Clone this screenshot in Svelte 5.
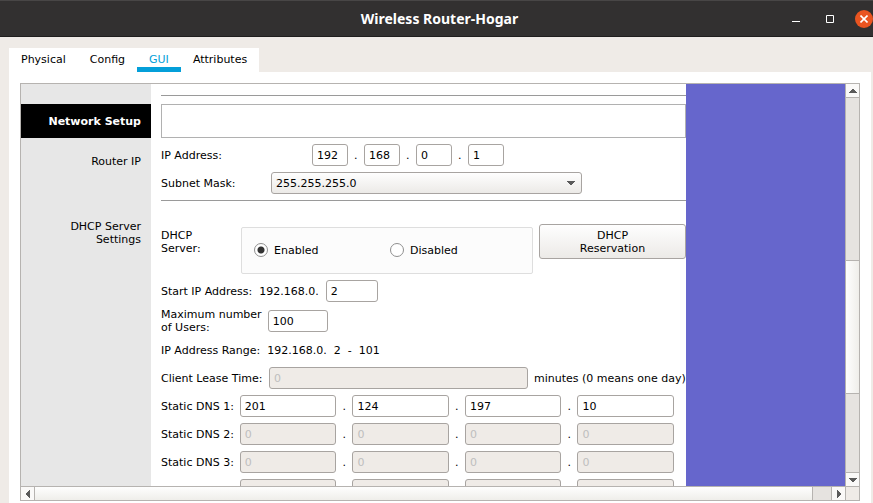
<script>
  const tabs = ['Physical', 'Config', 'GUI', 'Attributes'];
  let active = $state('GUI');
  let dhcp = $state('enabled');
  const routerIp = ['192', '168', '0', '1'];
  const servers = [
    { label: 'Static DNS 1:', parts: ['201', '124', '197', '10'], off: false },
    { label: 'Static DNS 2:', parts: ['0', '0', '0', '0'], off: true },
    { label: 'Static DNS 3:', parts: ['0', '0', '0', '0'], off: true },
    { label: 'Static DNS 4:', parts: ['0', '0', '0', '0'], off: true }
  ];
</script>

{#snippet arrowDown()}
  <svg width="8" height="4" viewBox="0 0 8 4"><path d="M0 0h8v1H7v1H6v1H5v1H3V3H2V2H1V1H0z" fill="#5a5a5a" /></svg>
{/snippet}

<div class="window">
  <header>
    <h1>Wireless Router-Hogar</h1>
    <div class="controls">
      <button aria-label="Minimize"><svg width="8" height="10" viewBox="0 0 8 10"><path d="M0 7.5h8" stroke="#fff" /></svg></button>
      <button aria-label="Maximize"><svg width="8" height="8" viewBox="0 0 8 8"><path d="M.5 .5h7v7h-7z" fill="none" stroke="#fff" /></svg></button>
      <button class="close" aria-label="Close"><svg width="8" height="8" viewBox="0 0 8 8"><path d="M.5 .5l7 7M7.5 .5l-7 7" stroke="#fff" stroke-width="1.6" /></svg></button>
    </div>
  </header>

  <nav>
    {#each tabs as tab}
      <button class="tab" class:active={tab === active} onclick={() => (active = tab)}>{tab}</button>
    {/each}
  </nav>

  <main>
    <div class="frame">
      <div class="view">
        <aside>
          <h2>Network Setup</h2>
          <p class="router">Router IP</p>
          <p class="settings">DHCP Server Settings</p>
        </aside>

        <form>
          <hr />
          <div class="blank"></div>
          <div class="row">
            <label class="ip-label" for="ip0">IP Address:</label>
            {#each routerIp as part, i}
              {#if i}<span class="dot">.</span>{/if}
              <input class="octet" id="ip{i}" aria-label={i ? `IP Address part ${i + 1}` : null} value={part} />
            {/each}
          </div>
          <div class="row">
            <label class="mask-label" for="mask">Subnet Mask:</label>
            <div class="picker">
              <select id="mask"><option>255.255.255.0</option></select>
              {@render arrowDown()}
            </div>
          </div>
          <hr />

          <div class="dhcp">
            <span class="dhcp-label" id="dhcp">DHCP Server:</span>
            <div class="choice" role="radiogroup" aria-labelledby="dhcp">
              <label><input type="radio" name="dhcp" value="enabled" bind:group={dhcp} />Enabled</label>
              <label><input type="radio" name="dhcp" value="disabled" bind:group={dhcp} />Disabled</label>
            </div>
            <button type="button" class="reserve">DHCP<br />Reservation</button>
          </div>

          <div class="row wide">
            <label for="start">Start IP Address:</label>
            <span>192.168.0.</span>
            <input class="start" id="start" value="2" />
          </div>
          <div class="row">
            <label for="users">Maximum number<br />of Users:</label>
            <input id="users" value="100" />
          </div>
          <div class="row wide range">
            <span>IP Address Range:</span>
            <span>192.168.0.</span>
            <span>2</span>
            <span>-</span>
            <span>101</span>
          </div>
          <div class="row">
            <label class="lease-label" for="lease">Client Lease Time:</label>
            <input class="lease" id="lease" value="0" disabled />
            <span>minutes (0 means one day)</span>
          </div>
          {#each servers as server, s}
            <div class="row dns">
              <label for="dns{s}0">{server.label}</label>
              {#each server.parts as part, i}
                {#if i}<span class="dot">.</span>{/if}
                <input id="dns{s}{i}" aria-label={i ? `${server.label} part ${i + 1}` : null} value={part} disabled={server.off} />
              {/each}
            </div>
          {/each}
        </form>
        <div class="backdrop"></div>
      </div>

      <div class="vbar">
        <button aria-label="Scroll up"><svg width="8" height="4" viewBox="0 0 8 4"><path d="M3 0h2v1h1v1h1v1h1v1H0V3h1V2h1V1h1z" fill="#5a5a5a" /></svg></button>
        <div class="before"></div>
        <div class="thumb"></div>
        <div class="after"></div>
        <button aria-label="Scroll down">{@render arrowDown()}</button>
      </div>

      <div class="hbar">
        <button aria-label="Scroll left"><svg width="4" height="8" viewBox="0 0 4 8"><path d="M4 0v8H3V7H2V6H1V5H0V3h1V2h1V1h1V0z" fill="#5a5a5a" /></svg></button>
        <div class="thumb"></div>
        <div class="after"></div>
        <button aria-label="Scroll right"><svg width="4" height="8" viewBox="0 0 4 8"><path d="M0 0h1v1h1v1h1v1h1v2H3v1H2v1H1v1H0z" fill="#5a5a5a" /></svg></button>
      </div>
      <div class="corner"></div>
    </div>
  </main>
</div>

<style>
  :global(body) { margin: 0; }
  * { box-sizing: border-box; }
  .window {
    display: flex;
    flex-direction: column;
    height: 100vh;
    overflow: hidden;
    background: #efebe7;
    color: #000;
    font: 11px/13px "DejaVu Sans", sans-serif;
  }
  button, input, select { font: inherit; color: inherit; margin: 0; }
  button { padding: 0; border: 0; background: none; }
  svg { display: block; }

  header {
    position: relative;
    display: flex;
    align-items: center;
    justify-content: center;
    flex: none;
    height: 37px;
    background: #323030;
    border-top: 1px solid #484646;
    border-bottom: 1px solid #1f1e1e;
    color: #fff;
  }
  h1 { margin: 0; padding-left: 6px; font: bold 14px/18px "Noto Sans", sans-serif; }
  .controls { position: absolute; right: 0; top: 0; height: 35px; display: flex; align-items: center; gap: 16px; }
  .controls button { display: grid; place-items: center; width: 18px; height: 18px; }
  .controls .close { background: #e95420; border-radius: 50%; }

  nav { display: flex; align-self: flex-start; flex: none; margin: 11px 0 0 9px; background: #fff; }
  .tab {
    height: 24px;
    padding: 0 12px;
    line-height: 24px;
  }
  .tab.active { color: #049fd9; box-shadow: inset 0 -5px #049fd9; }

  main { flex: 1; min-height: 0; display: flex; margin: 0 2px 0 9px; padding: 11px 11px 2px; background: #fff; }
  .frame {
    flex: 1;
    min-width: 0;
    display: grid;
    grid-template: minmax(0, 1fr) 14px / minmax(0, 1fr) 14px;
    border: 1px solid #b6b3b0;
  }
  .view { display: flex; overflow: hidden; }

  aside { flex: none; width: 130px; padding-top: 20px; background: #e7e7e7; text-align: right; }
  h2 { margin: 0; padding: 1px 10px 0 0; background: #000; color: #fff; font-size: 11px; line-height: 33px; }
  aside p { margin: 0; padding: 0 10px 0 40px; }
  .router { margin-top: 17px; }
  .settings { margin-top: 52px; }

  form { flex: none; width: 535px; display: flex; flex-direction: column; gap: 6px; padding: 11px 0 0 10px; background: #fff; }
  hr { width: 100%; height: 1px; margin: 0; border: 0; flex: none; background: #9a9a9a; }
  .blank { flex: none; height: 34px; margin-top: 2px; border: 1px solid #b1b1b1; }
  .row { display: flex; flex: none; align-items: center; gap: 6px; min-height: 22px; white-space: nowrap; }
  .wide { gap: 7px; }
  .dot { width: 4px; }
  input:not([type="radio"]), select {
    width: 60px;
    height: 22px;
    padding: 0 4px;
    border: 1px solid #a8a4a1;
    border-radius: 3px;
    background: #fff;
  }
  input:not([type="radio"]):disabled { background: #efebe7; color: #bebebe; }
  .row .octet { width: 36px; }
  .ip-label { width: 145px; }
  .mask-label { width: 104px; }
  .lease-label { width: 102px; }
  .picker { position: relative; width: 311px; }
  .picker select { display: block; width: 100%; appearance: none; background: linear-gradient(#fefefe, #eceae7); }
  .picker :global(svg) { position: absolute; right: 7px; top: 9px; pointer-events: none; }

  .dhcp { display: flex; flex: none; gap: 6px; align-items: flex-start; padding-top: 17px; }
  .dhcp-label { width: 74px; padding: 5px 20px 0 0; }
  .choice {
    width: 292px;
    height: 47px;
    margin-top: 3px;
    padding: 0 0 1px 12px;
    display: flex;
    align-items: center;
    border: 1px solid #dedede;
    border-radius: 2px;
    background: #fcfcfc;
  }
  .choice label { display: flex; align-items: center; gap: 6px; width: 136px; }
  input[type="radio"] {
    appearance: none;
    width: 14px;
    height: 14px;
    border: 1px solid #8f8f8f;
    border-radius: 50%;
    background: #fff;
  }
  input[type="radio"]:checked { background: radial-gradient(circle, #333 0 3px, #fff 4px); }
  .reserve {
    flex: 1;
    height: 35px;
    border: 1px solid #a8a4a1;
    border-radius: 3px;
    background: linear-gradient(#fefefe, #eceae7);
  }
  .row .start { width: 52px; }
  .range { min-height: 21px; }
  .row .lease { width: 259px; }
  .dns { padding-right: 12px; }
  .dns input:not([type="radio"]) { flex: 1; min-width: 0; }
  .backdrop { flex: 1; background: #6666cc; }

  .vbar, .hbar { display: flex; background: #e6e3e0; }
  .vbar { flex-direction: column; border-left: 1px solid #b6b3b0; }
  .hbar { border-top: 1px solid #b6b3b0; }
  .vbar button, .hbar button { flex: none; display: grid; place-items: center; width: 13px; height: 13px; background: #faf9f8; }
  .vbar .before, .vbar .after, .vbar .thumb { border-top: 1px solid #b6b3b0; }
  .vbar .thumb { flex: 133; background: linear-gradient(90deg, #fefefe, #efeeea); }
  .vbar .before { flex: 163; }
  .vbar .after { flex: 79; border-bottom: 1px solid #b6b3b0; }
  .hbar .thumb { flex: 779; border-left: 1px solid #b6b3b0; background: linear-gradient(#fefefe, #efeeea); }
  .hbar .after { flex: 18; border: solid #b6b3b0; border-width: 0 1px; }
  .corner { border: solid #b6b3b0; border-width: 1px 0 0 1px; background: #efebe7; }
</style>
